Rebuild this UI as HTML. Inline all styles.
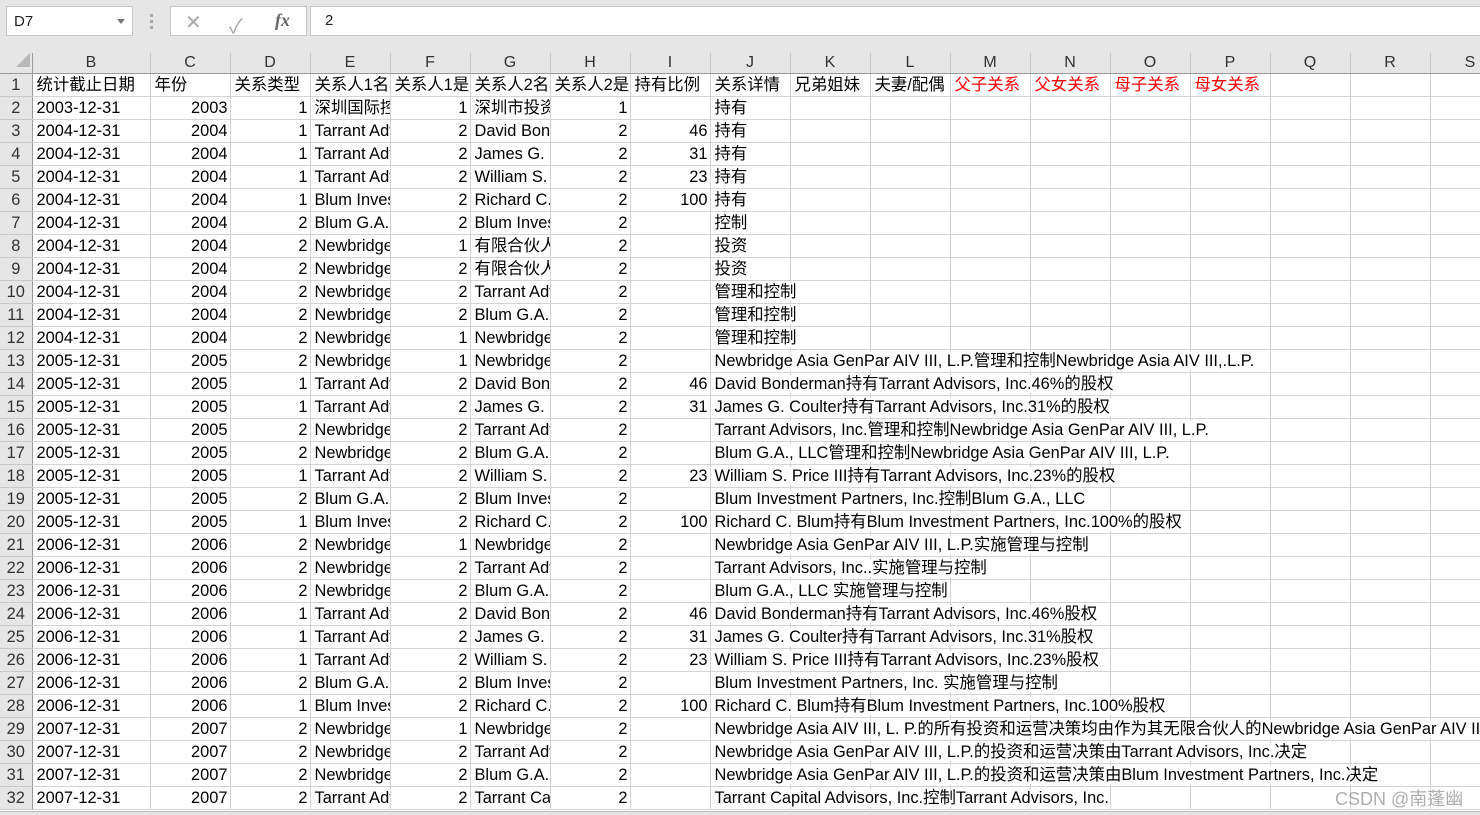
<!DOCTYPE html>
<html><head><meta charset="utf-8">
<style>
*{box-sizing:border-box;margin:0;padding:0}
body{width:1480px;height:815px;overflow:hidden;background:#fff;font-family:"Liberation Sans","Noto Sans CJK SC",sans-serif;position:relative}
#top{position:absolute;left:0;top:0;width:1480px;height:53px;background:#e6e6e6}
.box{position:absolute;background:#fff;border:1px solid #c6c6c6;font-size:15px;color:#222}
table{position:absolute;left:0;top:53px;border-collapse:collapse;table-layout:fixed;width:1510px}
td{height:23px;border-right:1px solid #d4d4d4;border-bottom:1px solid #d4d4d4;font-size:16.4px;line-height:21px;white-space:nowrap;overflow:hidden;padding:0 2px 0 4px;color:#000;vertical-align:bottom}
tr.h td{height:20px;background:#e6e6e6;text-align:center;color:#333;border-right:1px solid #c8c8c8;border-bottom:1px solid #9a9a9a;font-size:16px;line-height:20px;vertical-align:bottom;padding:0}
td.rh{background:#e6e6e6;text-align:center;color:#333;border-right:1px solid #9a9a9a;border-bottom:1px solid #c8c8c8;padding:0}
td.r{text-align:right}
td.j{overflow:visible;position:relative}
td.j span{position:relative;z-index:2;background:#fff;padding-right:1px}
.red{color:#f00}
#wm{position:absolute;left:1335px;top:785px;font-size:18px;color:rgba(120,120,120,.6);z-index:5}
#bot{position:absolute;left:0;top:811px;width:1480px;height:4px;background:#e6e6e6;border-top:1px solid #bbb}
</style></head><body>
<div id="top"></div>
<div class="box" style="left:6px;top:6px;width:127px;height:30px;padding:6px 0 0 7px">D7<span style="position:absolute;right:7px;top:12px;width:0;height:0;border-left:4px solid transparent;border-right:4px solid transparent;border-top:5px solid #777"></span></div>
<div style="position:absolute;left:150px;top:14px;width:3px;height:15px;border-left:3px dotted #aaa"></div>
<div class="box" style="left:170px;top:6px;width:137px;height:30px;color:#aaa">
<span style="position:absolute;left:14px;top:3px;font-size:20px">✕</span>
<span style="position:absolute;left:58px;top:3px;font-size:20px">✓</span>
<span style="position:absolute;left:104px;top:3px;font-size:18px;font-style:italic;font-family:'Liberation Serif',serif;color:#666;font-weight:bold">fx</span></div>
<div class="box" style="left:310px;top:6px;width:1175px;height:30px;padding:5px 0 0 14px">2</div>
<table>
<colgroup><col style="width:32px"><col style="width:118px"><col style="width:80px"><col style="width:80px"><col style="width:80px"><col style="width:80px"><col style="width:80px"><col style="width:80px"><col style="width:80px"><col style="width:80px"><col style="width:80px"><col style="width:80px"><col style="width:80px"><col style="width:80px"><col style="width:80px"><col style="width:80px"><col style="width:80px"><col style="width:80px"><col style="width:80px"></colgroup>
<tr class="h"><td style="border-bottom:1px solid #9a9a9a;border-right:1px solid #9a9a9a"><span style="display:inline-block;width:0;height:0;border-left:14px solid transparent;border-bottom:14px solid #b8b8b8;margin-left:14px"></span></td><td>B</td><td>C</td><td>D</td><td>E</td><td>F</td><td>G</td><td>H</td><td>I</td><td>J</td><td>K</td><td>L</td><td>M</td><td>N</td><td>O</td><td>P</td><td>Q</td><td>R</td><td>S</td></tr>
<tr><td class="rh">1</td><td>统计截止日期</td><td>年份</td><td>关系类型</td><td>关系人1名称</td><td>关系人1是</td><td>关系人2名称</td><td>关系人2是</td><td>持有比例</td><td>关系详情</td><td>兄弟姐妹</td><td>夫妻/配偶</td><td class="red">父子关系</td><td class="red">父女关系</td><td class="red">母子关系</td><td class="red">母女关系</td><td></td><td></td><td></td></tr>
<tr><td class="rh">2</td><td>2003-12-31</td><td class="r">2003</td><td class="r">1</td><td>深圳国际控股</td><td class="r">1</td><td>深圳市投资</td><td class="r">1</td><td class="r"></td><td>持有</td><td></td><td></td><td></td><td></td><td></td><td></td><td></td><td></td><td></td></tr>
<tr><td class="rh">3</td><td>2004-12-31</td><td class="r">2004</td><td class="r">1</td><td>Tarrant Advisors</td><td class="r">2</td><td>David Bonderman</td><td class="r">2</td><td class="r">46</td><td>持有</td><td></td><td></td><td></td><td></td><td></td><td></td><td></td><td></td><td></td></tr>
<tr><td class="rh">4</td><td>2004-12-31</td><td class="r">2004</td><td class="r">1</td><td>Tarrant Advisors</td><td class="r">2</td><td>James G. Coulter</td><td class="r">2</td><td class="r">31</td><td>持有</td><td></td><td></td><td></td><td></td><td></td><td></td><td></td><td></td><td></td></tr>
<tr><td class="rh">5</td><td>2004-12-31</td><td class="r">2004</td><td class="r">1</td><td>Tarrant Advisors</td><td class="r">2</td><td>William S. Price</td><td class="r">2</td><td class="r">23</td><td>持有</td><td></td><td></td><td></td><td></td><td></td><td></td><td></td><td></td><td></td></tr>
<tr><td class="rh">6</td><td>2004-12-31</td><td class="r">2004</td><td class="r">1</td><td>Blum Investment</td><td class="r">2</td><td>Richard C. Blum</td><td class="r">2</td><td class="r">100</td><td>持有</td><td></td><td></td><td></td><td></td><td></td><td></td><td></td><td></td><td></td></tr>
<tr><td class="rh">7</td><td>2004-12-31</td><td class="r">2004</td><td class="r">2</td><td>Blum G.A.</td><td class="r">2</td><td>Blum Investment</td><td class="r">2</td><td class="r"></td><td>控制</td><td></td><td></td><td></td><td></td><td></td><td></td><td></td><td></td><td></td></tr>
<tr><td class="rh">8</td><td>2004-12-31</td><td class="r">2004</td><td class="r">2</td><td>Newbridge</td><td class="r">1</td><td>有限合伙人</td><td class="r">2</td><td class="r"></td><td>投资</td><td></td><td></td><td></td><td></td><td></td><td></td><td></td><td></td><td></td></tr>
<tr><td class="rh">9</td><td>2004-12-31</td><td class="r">2004</td><td class="r">2</td><td>Newbridge</td><td class="r">2</td><td>有限合伙人</td><td class="r">2</td><td class="r"></td><td>投资</td><td></td><td></td><td></td><td></td><td></td><td></td><td></td><td></td><td></td></tr>
<tr><td class="rh">10</td><td>2004-12-31</td><td class="r">2004</td><td class="r">2</td><td>Newbridge</td><td class="r">2</td><td>Tarrant Advisors</td><td class="r">2</td><td class="r"></td><td class="j"><span>管理和控制</span></td><td></td><td></td><td></td><td></td><td></td><td></td><td></td><td></td><td></td></tr>
<tr><td class="rh">11</td><td>2004-12-31</td><td class="r">2004</td><td class="r">2</td><td>Newbridge</td><td class="r">2</td><td>Blum G.A.</td><td class="r">2</td><td class="r"></td><td class="j"><span>管理和控制</span></td><td></td><td></td><td></td><td></td><td></td><td></td><td></td><td></td><td></td></tr>
<tr><td class="rh">12</td><td>2004-12-31</td><td class="r">2004</td><td class="r">2</td><td>Newbridge</td><td class="r">1</td><td>Newbridge</td><td class="r">2</td><td class="r"></td><td class="j"><span>管理和控制</span></td><td></td><td></td><td></td><td></td><td></td><td></td><td></td><td></td><td></td></tr>
<tr><td class="rh">13</td><td>2005-12-31</td><td class="r">2005</td><td class="r">2</td><td>Newbridge</td><td class="r">1</td><td>Newbridge</td><td class="r">2</td><td class="r"></td><td class="j"><span>Newbridge Asia GenPar AIV III, L.P.管理和控制Newbridge Asia AIV III,.L.P.</span></td><td></td><td></td><td></td><td></td><td></td><td></td><td></td><td></td><td></td></tr>
<tr><td class="rh">14</td><td>2005-12-31</td><td class="r">2005</td><td class="r">1</td><td>Tarrant Advisors</td><td class="r">2</td><td>David Bonderman</td><td class="r">2</td><td class="r">46</td><td class="j"><span>David Bonderman持有Tarrant Advisors, Inc.46%的股权</span></td><td></td><td></td><td></td><td></td><td></td><td></td><td></td><td></td><td></td></tr>
<tr><td class="rh">15</td><td>2005-12-31</td><td class="r">2005</td><td class="r">1</td><td>Tarrant Advisors</td><td class="r">2</td><td>James G. Coulter</td><td class="r">2</td><td class="r">31</td><td class="j"><span>James G. Coulter持有Tarrant Advisors, Inc.31%的股权</span></td><td></td><td></td><td></td><td></td><td></td><td></td><td></td><td></td><td></td></tr>
<tr><td class="rh">16</td><td>2005-12-31</td><td class="r">2005</td><td class="r">2</td><td>Newbridge</td><td class="r">2</td><td>Tarrant Advisors</td><td class="r">2</td><td class="r"></td><td class="j"><span>Tarrant Advisors, Inc.管理和控制Newbridge Asia GenPar AIV III, L.P.</span></td><td></td><td></td><td></td><td></td><td></td><td></td><td></td><td></td><td></td></tr>
<tr><td class="rh">17</td><td>2005-12-31</td><td class="r">2005</td><td class="r">2</td><td>Newbridge</td><td class="r">2</td><td>Blum G.A.</td><td class="r">2</td><td class="r"></td><td class="j"><span>Blum G.A., LLC管理和控制Newbridge Asia GenPar AIV III, L.P.</span></td><td></td><td></td><td></td><td></td><td></td><td></td><td></td><td></td><td></td></tr>
<tr><td class="rh">18</td><td>2005-12-31</td><td class="r">2005</td><td class="r">1</td><td>Tarrant Advisors</td><td class="r">2</td><td>William S. Price</td><td class="r">2</td><td class="r">23</td><td class="j"><span>William S. Price III持有Tarrant Advisors, Inc.23%的股权</span></td><td></td><td></td><td></td><td></td><td></td><td></td><td></td><td></td><td></td></tr>
<tr><td class="rh">19</td><td>2005-12-31</td><td class="r">2005</td><td class="r">2</td><td>Blum G.A.</td><td class="r">2</td><td>Blum Investment</td><td class="r">2</td><td class="r"></td><td class="j"><span>Blum Investment Partners, Inc.控制Blum G.A., LLC</span></td><td></td><td></td><td></td><td></td><td></td><td></td><td></td><td></td><td></td></tr>
<tr><td class="rh">20</td><td>2005-12-31</td><td class="r">2005</td><td class="r">1</td><td>Blum Investment</td><td class="r">2</td><td>Richard C. Blum</td><td class="r">2</td><td class="r">100</td><td class="j"><span>Richard C. Blum持有Blum Investment Partners, Inc.100%的股权</span></td><td></td><td></td><td></td><td></td><td></td><td></td><td></td><td></td><td></td></tr>
<tr><td class="rh">21</td><td>2006-12-31</td><td class="r">2006</td><td class="r">2</td><td>Newbridge</td><td class="r">1</td><td>Newbridge</td><td class="r">2</td><td class="r"></td><td class="j"><span>Newbridge Asia GenPar AIV III, L.P.实施管理与控制</span></td><td></td><td></td><td></td><td></td><td></td><td></td><td></td><td></td><td></td></tr>
<tr><td class="rh">22</td><td>2006-12-31</td><td class="r">2006</td><td class="r">2</td><td>Newbridge</td><td class="r">2</td><td>Tarrant Advisors</td><td class="r">2</td><td class="r"></td><td class="j"><span>Tarrant Advisors, Inc..实施管理与控制</span></td><td></td><td></td><td></td><td></td><td></td><td></td><td></td><td></td><td></td></tr>
<tr><td class="rh">23</td><td>2006-12-31</td><td class="r">2006</td><td class="r">2</td><td>Newbridge</td><td class="r">2</td><td>Blum G.A.</td><td class="r">2</td><td class="r"></td><td class="j"><span>Blum G.A., LLC 实施管理与控制</span></td><td></td><td></td><td></td><td></td><td></td><td></td><td></td><td></td><td></td></tr>
<tr><td class="rh">24</td><td>2006-12-31</td><td class="r">2006</td><td class="r">1</td><td>Tarrant Advisors</td><td class="r">2</td><td>David Bonderman</td><td class="r">2</td><td class="r">46</td><td class="j"><span>David Bonderman持有Tarrant Advisors, Inc.46%股权</span></td><td></td><td></td><td></td><td></td><td></td><td></td><td></td><td></td><td></td></tr>
<tr><td class="rh">25</td><td>2006-12-31</td><td class="r">2006</td><td class="r">1</td><td>Tarrant Advisors</td><td class="r">2</td><td>James G. Coulter</td><td class="r">2</td><td class="r">31</td><td class="j"><span>James G. Coulter持有Tarrant Advisors, Inc.31%股权</span></td><td></td><td></td><td></td><td></td><td></td><td></td><td></td><td></td><td></td></tr>
<tr><td class="rh">26</td><td>2006-12-31</td><td class="r">2006</td><td class="r">1</td><td>Tarrant Advisors</td><td class="r">2</td><td>William S. Price</td><td class="r">2</td><td class="r">23</td><td class="j"><span>William S. Price III持有Tarrant Advisors, Inc.23%股权</span></td><td></td><td></td><td></td><td></td><td></td><td></td><td></td><td></td><td></td></tr>
<tr><td class="rh">27</td><td>2006-12-31</td><td class="r">2006</td><td class="r">2</td><td>Blum G.A.</td><td class="r">2</td><td>Blum Investment</td><td class="r">2</td><td class="r"></td><td class="j"><span>Blum Investment Partners, Inc. 实施管理与控制</span></td><td></td><td></td><td></td><td></td><td></td><td></td><td></td><td></td><td></td></tr>
<tr><td class="rh">28</td><td>2006-12-31</td><td class="r">2006</td><td class="r">1</td><td>Blum Investment</td><td class="r">2</td><td>Richard C. Blum</td><td class="r">2</td><td class="r">100</td><td class="j"><span>Richard C. Blum持有Blum Investment Partners, Inc.100%股权</span></td><td></td><td></td><td></td><td></td><td></td><td></td><td></td><td></td><td></td></tr>
<tr><td class="rh">29</td><td>2007-12-31</td><td class="r">2007</td><td class="r">2</td><td>Newbridge</td><td class="r">1</td><td>Newbridge</td><td class="r">2</td><td class="r"></td><td class="j"><span>Newbridge Asia AIV III, L. P.的所有投资和运营决策均由作为其无限合伙人的Newbridge Asia GenPar AIV III, L.P.作出</span></td><td></td><td></td><td></td><td></td><td></td><td></td><td></td><td></td><td></td></tr>
<tr><td class="rh">30</td><td>2007-12-31</td><td class="r">2007</td><td class="r">2</td><td>Newbridge</td><td class="r">2</td><td>Tarrant Advisors</td><td class="r">2</td><td class="r"></td><td class="j"><span>Newbridge Asia GenPar AIV III, L.P.的投资和运营决策由Tarrant Advisors, Inc.决定</span></td><td></td><td></td><td></td><td></td><td></td><td></td><td></td><td></td><td></td></tr>
<tr><td class="rh">31</td><td>2007-12-31</td><td class="r">2007</td><td class="r">2</td><td>Newbridge</td><td class="r">2</td><td>Blum G.A.</td><td class="r">2</td><td class="r"></td><td class="j"><span>Newbridge Asia GenPar AIV III, L.P.的投资和运营决策由Blum Investment Partners, Inc.决定</span></td><td></td><td></td><td></td><td></td><td></td><td></td><td></td><td></td><td></td></tr>
<tr><td class="rh">32</td><td>2007-12-31</td><td class="r">2007</td><td class="r">2</td><td>Tarrant Advisors</td><td class="r">2</td><td>Tarrant Capital</td><td class="r">2</td><td class="r"></td><td class="j"><span>Tarrant Capital Advisors, Inc.控制Tarrant Advisors, Inc.</span></td><td></td><td></td><td></td><td></td><td></td><td></td><td></td><td></td><td></td></tr>
</table>
<div id="wm">CSDN @南蓬幽</div>
<div id="bot"></div>
</body></html>
